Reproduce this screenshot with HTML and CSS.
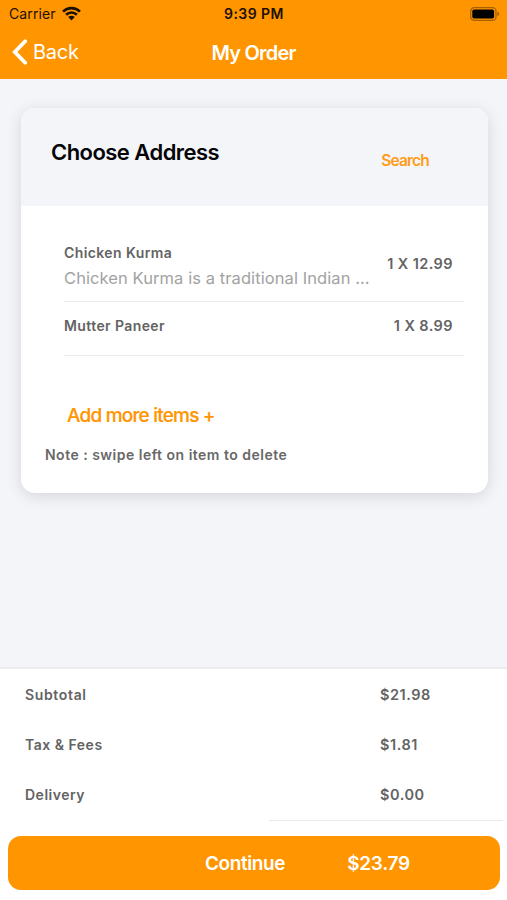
FILE: index.html
```html
<!DOCTYPE html>
<html lang="en">
<head>
<meta charset="utf-8">
<title>My Order</title>
<link rel="stylesheet" href="styles.css">
</head>
<body>
<div class="screen">
  <header class="top">
    <div class="status">
      <div class="carrier"><span class="carrier-name">Carrier</span>
        <svg class="wifi" width="19" height="15" viewBox="0 0 18 14" fill="none" stroke="#1c1000" stroke-width="2.5"><path d="M1 5.2a11.4 11.4 0 0 1 16 0M3.9 8.2a7.2 7.2 0 0 1 10.2 0"/><path d="M9 13.6 5.9 10.4a4.4 4.4 0 0 1 6.2 0Z" fill="#1c1000" stroke="none"/></svg>
      </div>
      <span class="time">9:39 PM</span>
      <svg class="battery" width="30" height="14" viewBox="0 0 30 14"><rect x=".7" y=".7" width="25.3" height="12.6" rx="3.6" fill="none" stroke="#a56100" stroke-width="1.3"/><rect x="2.3" y="2.4" width="21.8" height="9.2" rx="1.8" fill="#000"/><path d="M27.4 4.8q1.9.6 1.9 2.2t-1.9 2.2z" fill="#a56100"/></svg>
    </div>
    <nav class="nav">
      <div class="back"><svg width="16" height="26" viewBox="0 0 16 26" fill="none" stroke="#fff" stroke-width="3.8" stroke-linecap="round" stroke-linejoin="miter"><path d="M13.2 2.3 2.8 13l10.4 10.7"/></svg><span class="back-label">Back</span></div>
      <h1 class="title">My Order</h1>
    </nav>
  </header>
  <main class="content">
    <section class="card">
      <div class="card-head"><h2 class="address">Choose Address</h2><span class="search">Search</span></div>
      <div class="items">
        <div class="item item-tall">
          <div class="item-text"><div class="name name-first">Chicken Kurma</div><div class="desc">Chicken Kurma is a traditional Indian ...</div></div>
          <span class="price price-first">1 X 12.99</span>
        </div>
        <div class="item item-short"><span class="name name-second">Mutter Paneer</span><span class="price price-second">1 X 8.99</span></div>
      </div>
      <div class="add"><span class="add-label">Add more items +</span></div>
      <div class="note"><span class="note-label">Note : swipe left on item to delete</span></div>
    </section>
  </main>
  <footer class="summary">
    <div class="row"><span class="label subtotal">Subtotal</span><span class="value">$21.98</span></div>
    <div class="row"><span class="label tax">Tax &amp; Fees</span><span class="value">$1.81</span></div>
    <div class="row"><span class="label delivery">Delivery</span><span class="value">$0.00</span></div>
    <div class="rule"></div>
    <div class="continue"><span class="continue-label">Continue</span><span class="total">$23.79</span></div>
  </footer>
</div>
</body>
</html>
```
FILE: styles.css
```css
* { box-sizing: border-box; }
body { margin: 0; font-family: Inter, "Liberation Sans", sans-serif; }
h1, h2 { margin: 0; }
.screen { width: 507px; height: 900px; display: flex; flex-direction: column; background: #f4f5f9; white-space: nowrap; overflow: hidden; }
.top { height: 79px; flex: none; background: #ff9500; }
.status { height: 27px; display: grid; grid-template-columns: 1fr auto 1fr; align-items: center; padding: 0 7px 0 9px; color: #1c1000; font-size: 14px; }
.carrier { display: flex; align-items: center; gap: 6px; letter-spacing: .1px; }
.time { font-weight: 600; letter-spacing: .45px; margin-right: 1px; }
.battery { justify-self: end; }
.nav { height: 50px; display: grid; grid-template-columns: 1fr auto 1fr; align-items: center; padding: 0 12px; color: #fff; }
.back { display: flex; align-items: center; gap: 5px; font-size: 20px; letter-spacing: -.25px; }
.title { font-size: 20px; font-weight: 600; letter-spacing: -.8px; padding-top: 1px; }
.content { height: 588px; flex: none; padding: 29px 19px 0 21px; }
.card { height: 385px; border-radius: 14px; background: #fff; overflow: hidden; box-shadow: 0 3px 16px rgba(0, 0, 0, .13); }
.card-head { height: 98px; display: flex; justify-content: space-between; background: #f4f5f9; padding: 31px 59px 0 30px; }
.address { font-size: 22px; line-height: 27px; font-weight: 600; letter-spacing: -.54px; color: #050507; }
.search { margin-top: 12px; font-size: 15.5px; line-height: 20px; font-weight: 600; letter-spacing: -.8px; color: #ff9b18; }
.items { padding: 32px 24px 0 43px; }
.item { display: flex; justify-content: space-between; border-bottom: 1px solid #e9e9e9; padding-right: 11px; }
.item-tall { height: 64px; }
.item-short { height: 54px; align-items: center; padding-bottom: 5px; }
.name, .price { font-size: 14px; line-height: 18px; font-weight: 600; letter-spacing: .4px; color: #636363; }
.price { font-size: 14.5px; letter-spacing: .42px; }
.item-text { padding-top: 6px; }
.desc { font-size: 16.5px; line-height: 22px; margin-top: 5px; color: #a2a2a2; letter-spacing: .08px; }
.price-first { margin-top: 17px; }
.add { height: 48px; margin-top: 36px; padding-left: 46px; font-size: 19px; line-height: 48px; font-weight: 500; letter-spacing: -.8px; color: #ff9500; -webkit-text-stroke: .2px #ff9500; }
.note { padding-left: 24px; font-size: 14px; line-height: 29px; font-weight: 600; letter-spacing: .49px; color: #686868; }
.summary { flex: 1; background: #fff; border-top: 2px solid #ececee; }
.row { height: 50px; display: grid; grid-template-columns: 355px 1fr; align-items: center; padding-left: 25px; font-size: 14px; font-weight: 600; letter-spacing: .5px; color: #636363; }
.subtotal { letter-spacing: .65px; }
.value { font-size: 14.5px; letter-spacing: .55px; }
.rule { width: 234px; height: 1px; margin: 1px 4px 0 auto; background: #e9e9e9; }
.continue { height: 54px; margin: 15px 7px 0 8px; border-radius: 13px; background: #ff9500; color: #fff; font-size: 19px; font-weight: 600; letter-spacing: -.4px; display: flex; align-items: center; gap: 62px; padding-left: 197px; }
.total { letter-spacing: -.3px; }
```
